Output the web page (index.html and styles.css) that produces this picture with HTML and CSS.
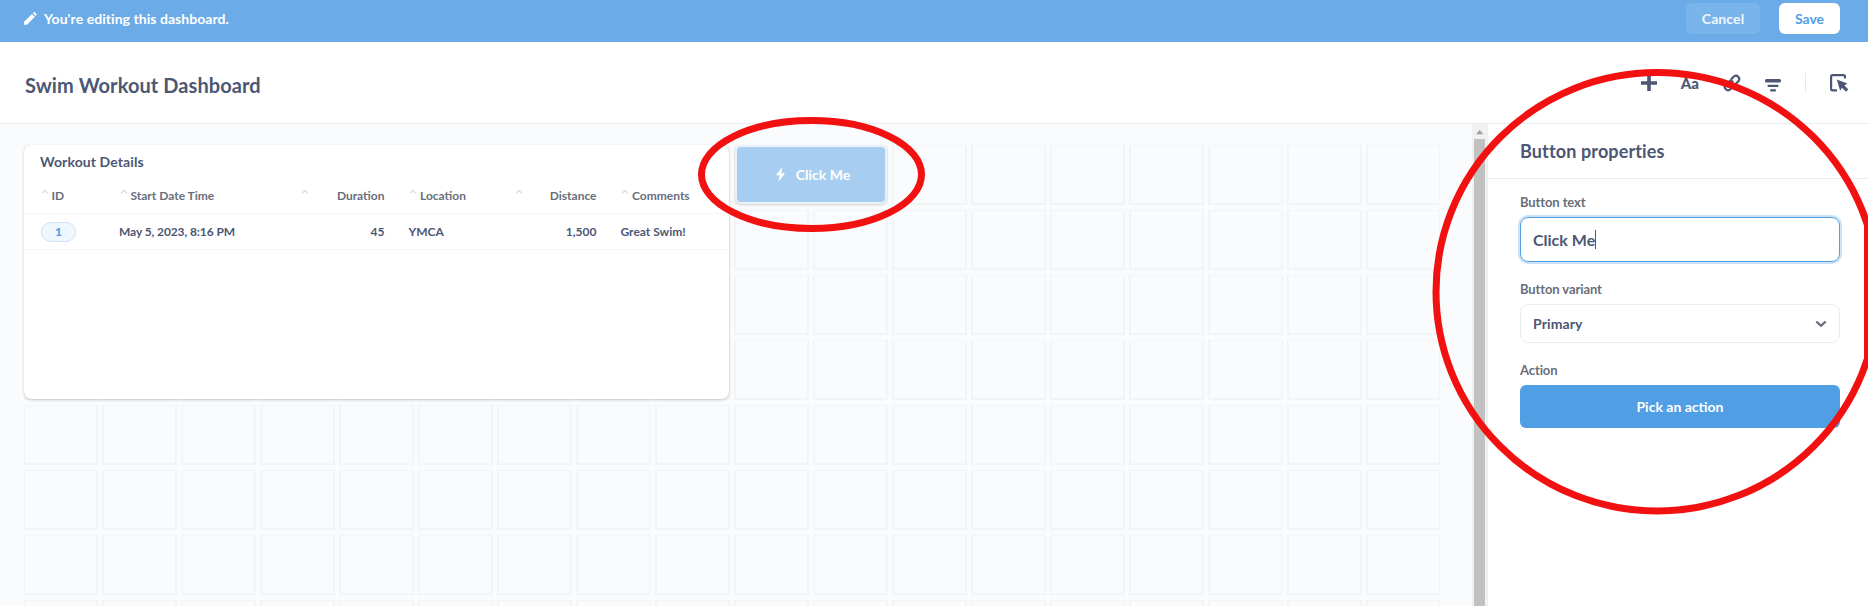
FILE: index.html
```html
<!DOCTYPE html>
<html lang="en">
<head>
<meta charset="utf-8">
<title>Swim Workout Dashboard</title>
<link rel="stylesheet" href="styles.css">
</head>
<body>
<div class="app">
  <div class="edit-bar">
    <svg class="pencil" width="13" height="13" viewBox="0 0 13 13"><path d="M0 9.8 8 1.9l2.900 2.900L3 12.7H0zM8.800 1.100 9.700.3q.6-.5 1.200 0l1.600 1.600q.5.6 0 1.200l-.8.9z" fill="currentColor"/></svg>
    <span class="edit-text">You're editing this dashboard.</span>
    <button class="btn btn-cancel">Cancel</button>
    <button class="btn btn-save">Save</button>
  </div>
  <header class="header">
    <h1 class="title">Swim Workout Dashboard</h1>
    <div class="tools">
      <svg width="16" height="16" viewBox="0 0 16 16"><path d="M8 0v16M0 8h16" stroke="currentColor" stroke-width="3.600"/></svg>
      <span class="tool-text">Aa</span>
      <svg width="18" height="18" viewBox="0 0 18 18" fill="none" stroke="currentColor" stroke-width="2.200" stroke-linecap="round"><path d="M8.200 5.200 11 2.400a3.300 3.300 0 0 1 4.600 4.600l-3 3a3.300 3.300 0 0 1-4.300.4M9.800 12.800 7 15.600A3.300 3.300 0 0 1 2.400 11l3-3a3.300 3.300 0 0 1 4.300-.4"/></svg>
      <svg width="16" height="13" viewBox="0 0 16 13" fill="currentColor"><rect width="16" height="3.400" rx="1.500"/><rect x="2.500" y="5.800" width="11" height="2.200" rx="1"/><rect x="5" y="10.300" width="6" height="2.200" rx="1"/></svg>
      <i class="tool-divider"></i>
      <svg width="18" height="18" viewBox="0 0 18 18"><path d="M15 4.500V2.600q0-1.500-1.500-1.500H2.600Q1.100 1.100 1.100 2.600v12.200q0 1.500 1.500 1.500H7" fill="none" stroke="currentColor" stroke-width="2.200"/><path d="m6.800 5.600 10.600 3.800-3 2 4 4-2.400 2.400-4-4-1.900 3z" fill="currentColor"/></svg>
    </div>
  </header>
  <div class="body">
    <main class="canvas">
      <svg class="grid-lines" width="1416" height="461">
        <defs><pattern id="cell" width="79" height="65" x="-1" y="0" patternUnits="userSpaceOnUse"><path d="M0 0h75v60H0zM2 1v57h71V1z" fill="#f3f4f5" fill-rule="evenodd"/></pattern></defs>
        <rect width="1416" height="461" fill="url(#cell)"/>
      </svg>
      <div class="board">
        <section class="card">
          <h2 class="card-title">Workout Details</h2>
          <div class="row head">
            <span class="cell"><svg class="caret" viewBox="0 0 8 5"><path d="m1 4.300 3-3 3 3"/></svg>ID</span>
            <span class="cell"><svg class="caret" viewBox="0 0 8 5"><path d="m1 4.300 3-3 3 3"/></svg>Start Date Time</span>
            <span class="cell num"><svg class="caret" viewBox="0 0 8 5"><path d="m1 4.300 3-3 3 3"/></svg>Duration</span>
            <span class="cell"><svg class="caret" viewBox="0 0 8 5"><path d="m1 4.300 3-3 3 3"/></svg>Location</span>
            <span class="cell num"><svg class="caret" viewBox="0 0 8 5"><path d="m1 4.300 3-3 3 3"/></svg>Distance</span>
            <span class="cell"><svg class="caret" viewBox="0 0 8 5"><path d="m1 4.300 3-3 3 3"/></svg>Comments</span>
          </div>
          <div class="row">
            <span class="cell"><b class="pill">1</b></span>
            <span class="cell date">May 5, 2023, 8:16 PM</span>
            <span class="cell value">45</span>
            <span class="cell">YMCA</span>
            <span class="cell value">1,500</span>
            <span class="cell">Great Swim!</span>
          </div>
        </section>
        <div class="action-card">
          <button class="action">
            <svg width="9" height="15" viewBox="0 0 9 15"><path d="M6.300 0 0 8.300h3.600L2.500 15 9 6.300H5.300z" fill="currentColor"/></svg>
            <span>Click Me</span>
          </button>
        </div>
      </div>
    </main>
    <div class="scrollbar">
      <svg width="16" height="15" viewBox="0 0 16 15"><path d="M4 10.300 7.700 6l3.700 4.300z" fill="#a0a0a0"/></svg>
      <div class="thumb"></div>
    </div>
    <aside class="sidebar">
      <h2 class="side-title">Button properties</h2>
      <div class="form">
        <label class="label">Button text</label>
        <div class="input"><span>Click Me</span><i class="cursor"></i></div>
        <label class="label">Button variant</label>
        <div class="select"><span>Primary</span><svg width="12" height="8" viewBox="0 0 12 8"><path d="m1.300 1.500 4.700 4.300 4.700-4.300" fill="none" stroke="#696e7b" stroke-width="2.300"/></svg></div>
        <label class="label">Action</label>
        <button class="pick">Pick an action</button>
      </div>
    </aside>
  </div>
  <svg class="marks" width="1868" height="606" viewBox="0 0 1868 606">
    <g fill="none" stroke="#f21111" stroke-width="7">
      <ellipse cx="811.500" cy="174.500" rx="110" ry="54"/>
      <ellipse cx="1657" cy="291.800" rx="221" ry="219.200"/>
    </g>
    <rect x="1864" y="226" width="4" height="132" fill="#f21111"/>
  </svg>
</div>
</body>
</html>
```
FILE: styles.css
```css
* { box-sizing: border-box; }
body { margin: 0; font-family: Lato, sans-serif; font-weight: 700; color: #4c5773; }
h1, h2 { margin: 0; font-weight: 700; }
button { font: inherit; border: 0; padding: 0; }
svg { display: block; flex: none; }
.app { position: relative; width: 1868px; height: 606px; overflow: hidden; display: flex; flex-direction: column; background: #fff; }

.edit-bar { height: 42px; flex: none; display: flex; align-items: flex-start; padding: 3px 28px 0 24px; background: #6aabe8; color: #fff; }
.pencil { margin-top: 9px; }
.edit-text { margin: 7px auto 0 7px; font-size: 14px; line-height: 18px; letter-spacing: .05px; }
.btn { height: 31px; border-radius: 6px; font-size: 14px; }
.btn-cancel { width: 74px; margin-right: 19px; background: #79b4ea; color: #f0f7fd; letter-spacing: .1px; }
.btn-save { width: 61px; background: #fff; color: #509ee3; }

.header { height: 82px; flex: none; display: flex; align-items: center; justify-content: space-between; padding: 4px 20px 0 25px; border-bottom: 1px solid #eaebed; }
.title { font-size: 20px; line-height: 24px; letter-spacing: .08px; }
.tools { display: flex; align-items: center; height: 20px; margin-bottom: 3px; }
.tool-text { margin: 0 24px 0 24px; font-size: 15px; line-height: 20px; font-weight: 900; }
.tools svg:nth-of-type(3) { margin: 4px 24px 0 24px; }
.tool-divider { width: 1px; height: 20px; background: #e6e8ec; margin-right: 24px; }

.body { flex: 1; min-height: 0; display: flex; }
.canvas { position: relative; width: 1472px; flex: none; padding: 21px 0 0 24px; background: #fafbfd; overflow: hidden; }
.grid-lines { position: absolute; left: 24px; top: 21px; }
.board { position: relative; display: flex; gap: 6px; }
.card { width: 705px; height: 254px; background: #fff; border-radius: 8px; box-shadow: 0 1px 3px rgba(0,0,0,.2); }
.card-title { padding: 8px 0 0 16px; height: 33px; font-size: 14px; line-height: 18px; letter-spacing: .1px; }
.row { display: grid; grid-template-columns: 79px 171px 118.5px 95.5px 116.5px 100px; height: 36px; align-items: center; padding: 0 0 0 16px; font-size: 12px; border-bottom: 1px solid #f5f6f7; }
.row .cell { display: flex; align-items: center; white-space: nowrap; }
.head { color: #696e7b; }
.caret { width: 8px; height: 5px; margin: -8px 3px 0 0.500px; fill: none; stroke: #d6d9de; stroke-width: 1.200; }
.num .caret { margin-right: auto; }
.num, .value { padding-right: 24px; margin-left: 10px; }
.value { justify-content: flex-end; }
.date { letter-spacing: -.1px; }
.pill { width: 35px; height: 20px; border: 1px solid #cfe3f8; border-radius: 10px; background: #f0f6fd; color: #509ee3; text-align: center; line-height: 18px; margin-left: 1px; }
.action-card { width: 152px; height: 59px; padding: 2px; border-radius: 7px; background: #eaf1f8; box-shadow: 0 1px 3px rgba(0,0,0,.16); }
.action { width: 148px; height: 55px; padding-left: 4px; border-radius: 4px; background: #a7cdf1; color: #fff; display: flex; align-items: center; justify-content: center; gap: 11px; font-size: 14px; }

.scrollbar { width: 15px; flex: none; background: #f1f1f1; display: flex; flex-direction: column; }
.thumb { flex: 1; width: 11px; margin-left: 2px; background: #c1c1c1; }

.sidebar { flex: 1; border-left: 1px solid #eeecec; background: #fff; }
.side-title { height: 55px; padding: 15px 0 0 32px; border-bottom: 1px solid #eeecec; font-size: 18px; line-height: 24px; letter-spacing: .13px; }
.form { padding: 15px 28px 0 32px; display: flex; flex-direction: column; }
.label { font-size: 13px; line-height: 16px; margin-bottom: 7px; color: #696e7b; letter-spacing: -.1px; }
.input { height: 45px; display: flex; align-items: center; padding-left: 12px; border: 1px solid #509ee3; border-radius: 8px; box-shadow: 0 0 0 2px #cbe2f7; font-size: 16px; margin-bottom: 19px; }
.cursor { width: 1px; height: 19px; background: #4c5773; }
.select { height: 39px; display: flex; align-items: center; justify-content: space-between; padding: 0 12px; border: 1px solid #eeecec; border-radius: 8px; font-size: 14px; letter-spacing: .1px; margin-bottom: 19px; }
.pick { height: 43px; border-radius: 6px; background: #509ee3; color: #fff; font-size: 14px; }

.marks { position: absolute; left: 0; top: 0; }
```
